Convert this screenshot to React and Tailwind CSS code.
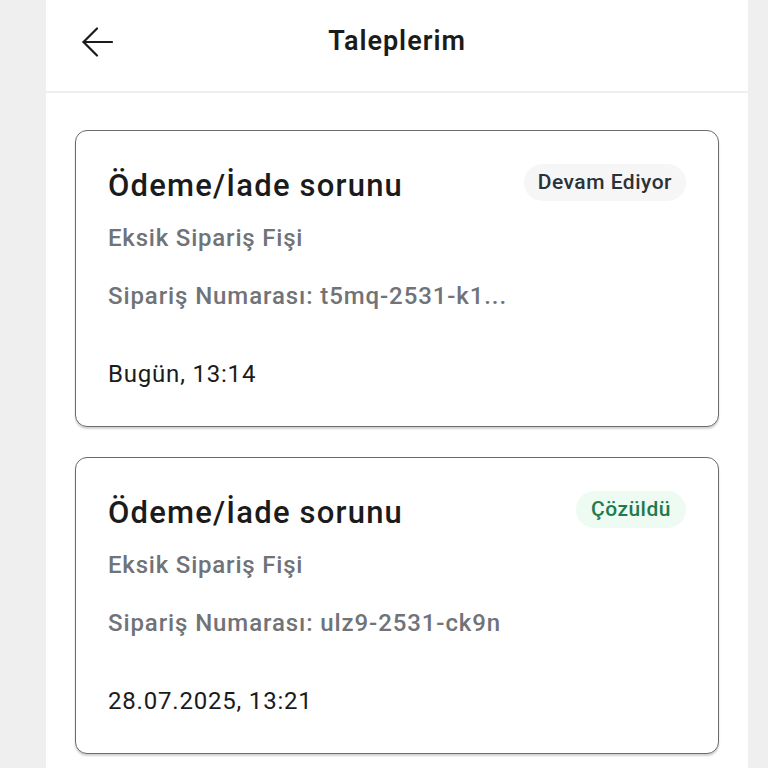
import React from "react";

const tickets = [
  {
    title: "Ödeme/İade sorunu",
    sub: "Eksik Sipariş Fişi",
    order: "t5mq-2531-k1...",
    date: "Bugün, 13:14",
    status: "Devam Ediyor",
    done: false,
  },
  {
    title: "Ödeme/İade sorunu",
    sub: "Eksik Sipariş Fişi",
    order: "ulz9-2531-ck9n",
    date: "28.07.2025, 13:21",
    status: "Çözüldü",
    done: true,
  },
];

const TicketCard = ({ t }) => (
  <div className="h-[297px] border border-[#6b6b6b] rounded-[12px] bg-white shadow-[0_2px_2px_rgba(0,0,0,0.18)] px-8 pt-[37px]">
    <div className="flex justify-between items-start">
      <p className="text-[31px] leading-[36px] font-medium tracking-[1.2px] text-[#1b1b1b]">{t.title}</p>
      <span
        className={
          t.done
            ? "-mt-[4px] rounded-full px-[15px] py-[6px] text-[21px] leading-[25px] font-medium tracking-[0.5px] bg-[#edfbf3] text-[#1f7a4d]"
            : "-mt-[4px] rounded-full px-[14px] py-[6px] text-[21px] leading-[25px] font-medium tracking-[0.5px] bg-[#f6f6f6] text-[#2c3136]"
        }
      >
        {t.status}
      </span>
    </div>
    <p className="text-[24px] leading-[30px] font-medium tracking-[0.8px] text-[#707378] mt-[19px]">{t.sub}</p>
    <p className="text-[24px] leading-[30px] font-medium tracking-[0.9px] text-[#707378] mt-[28px]">
      Sipariş Numarası: {t.order}
    </p>
    <p className="text-[24px] leading-[30px] tracking-[0.8px] text-[#1b1b1b] mt-[48px]">{t.date}</p>
  </div>
);

export default function App() {
  return (
    <div className="h-[768px] overflow-hidden bg-[#efefef]" style={{ fontFamily: "Roboto, 'Noto Sans', sans-serif" }}>
      <div className="ml-[46px] w-[702px] h-full bg-white">
        <div className="h-[93px] border-b-2 border-[#efefef] grid grid-cols-[1fr_auto_1fr] items-start pt-[25px]">
          <button className="ml-[36px] mt-[2px] w-[31px] h-[30px]">
            <svg width="31" height="30" viewBox="0 0 31 30" fill="none" stroke="#1b1b1b" strokeWidth="2.2" strokeLinecap="round" strokeLinejoin="round">
              <path d="M30 15H1.5" />
              <path d="M15 1.5L1.5 15L15 28.5" />
            </svg>
          </button>
          <h1 className="text-[27px] leading-[32px] font-semibold tracking-[1px] text-[#1b1b1b]">Taleplerim</h1>
          <div />
        </div>
        <div className="px-[29px] pt-[37px] flex flex-col gap-[30px]">
          {tickets.map((t, i) => (
            <TicketCard key={i} t={t} />
          ))}
        </div>
      </div>
    </div>
  );
}
